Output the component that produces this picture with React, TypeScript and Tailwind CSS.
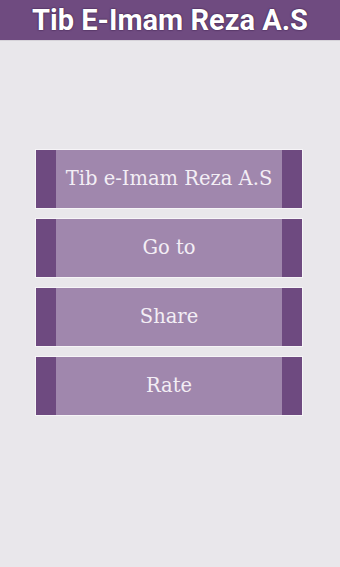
const ITEMS = ["Tib e-Imam Reza A.S", "Go to", "Share", "Rate"];

export default function App() {
  return (
    <div className="w-[340px] h-[567px] bg-[#e9e7eb] flex flex-col">
      <header className="h-[40px] bg-[#6f4b80] flex items-center justify-center">
        <h1
          className="text-white text-[29px] font-bold font-['Roboto',sans-serif] leading-none [text-shadow:0_0_2px_#3a1f48,0_0_1px_#3a1f48]"
        >
          Tib E-Imam Reza A.S
        </h1>
      </header>
      <div className="h-px bg-[#d6d3d9]" />
      <div className="flex flex-col gap-[9px] pt-[108px] pl-[35px]">
        {ITEMS.map(label => (
          <button
            key={label}
            className="w-[268px] h-[60px] border border-[#f6f4f7] flex"
          >
            <span className="w-[20px] bg-[#6e4a80]" />
            <span className="flex-1 bg-[#a087ad] flex items-center justify-center text-[#f3eef5] text-[19.5px] font-['DejaVu_Serif',serif]">
              {label}
            </span>
            <span className="w-[20px] bg-[#6e4a80]" />
          </button>
        ))}
      </div>
    </div>
  );
}
